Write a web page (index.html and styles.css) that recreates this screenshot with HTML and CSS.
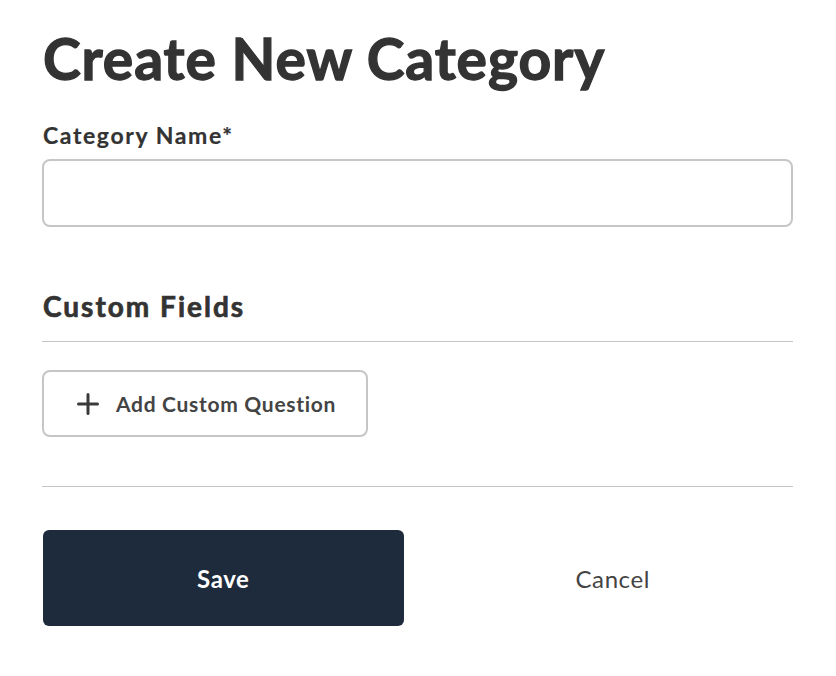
FILE: index.html
```html
<!DOCTYPE html>
<html>
<head>
<meta charset="utf-8">
<link rel="stylesheet" href="styles.css">
</head>
<body>
<div class="page">
  <h1 class="title">Create New Category</h1>
  <label class="label" for="name">Category Name*</label>
  <input class="input" id="name" type="text">
  <h2 class="section">Custom Fields</h2>
  <hr class="rule">
  <button class="add-btn" type="button">
    <svg class="plus" width="22" height="22" viewBox="0 0 22 22"><path d="M11 1.5v19M1.5 11h19" stroke="#3a3a3a" stroke-width="3" stroke-linecap="round"/></svg>
    <span>Add Custom Question</span>
  </button>
  <hr class="rule rule2">
  <div class="actions">
    <button class="save" type="button">Save</button>
    <button class="cancel" type="button">Cancel</button>
  </div>
</div>
</body>
</html>
```
FILE: styles.css
```css
html, body {
  margin: 0;
  padding: 0;
  background: #fff;
}
body {
  font-family: Lato, "Noto Sans", sans-serif;
  color: #333;
}
.page {
  padding: 20px 43px 0 42px;
  display: flex;
  flex-direction: column;
  align-items: stretch;
}
.title {
  margin: 0 0 0 1px;
  font-size: 57px;
  font-weight: 700;
  line-height: 76px;
  color: #333;
  letter-spacing: 0.9px;
  -webkit-text-stroke: 1.3px #333;
}
.label {
  margin: 24px 0 0 1px;
  font-size: 23px;
  font-weight: 700;
  line-height: 30px;
  color: #333;
  letter-spacing: 1.6px;
  -webkit-text-stroke: 0.2px #333;
}
.input {
  margin-top: 9px;
  height: 68px;
  box-sizing: border-box;
  border: 2px solid #c6c6c6;
  border-radius: 8px;
  font-size: 20px;
  padding: 0 14px;
  outline: none;
}
.section {
  margin: 61px 0 0 1px;
  font-size: 28px;
  font-weight: 700;
  line-height: 36px;
  color: #333;
  letter-spacing: 2px;
  -webkit-text-stroke: 0.7px #333;
}
.rule {
  margin: 17px 0 0 0;
  border: 0;
  height: 1px;
  background: #c4c4c4;
}
.add-btn {
  margin-top: 28px;
  align-self: flex-start;
  width: 326px;
  height: 67px;
  box-sizing: border-box;
  border: 2px solid #c6c6c6;
  border-radius: 8px;
  background: #fff;
  display: flex;
  align-items: center;
  padding: 0 0 0 33px;
  gap: 17px;
  font-family: Lato, "Noto Sans", sans-serif;
  font-size: 21px;
  font-weight: 700;
  letter-spacing: 0.7px;
  color: #444;
}
.rule2 {
  margin-top: 49px;
}
.actions {
  margin-top: 43px;
  margin-left: 1px;
  display: grid;
  grid-template-columns: 1fr 1fr;
  gap: 29px;
}
.save {
  height: 96px;
  border: 0;
  border-radius: 6px;
  background: #1e2b3d;
  color: #fff;
  font-family: Lato, "Noto Sans", sans-serif;
  font-size: 24px;
  font-weight: 700;
  letter-spacing: 0.6px;
}
.cancel {
  height: 96px;
  border: 0;
  background: transparent;
  color: #444;
  font-family: Lato, "Noto Sans", sans-serif;
  font-size: 24px;
  font-weight: 400;
  letter-spacing: 0.6px;
}
```
